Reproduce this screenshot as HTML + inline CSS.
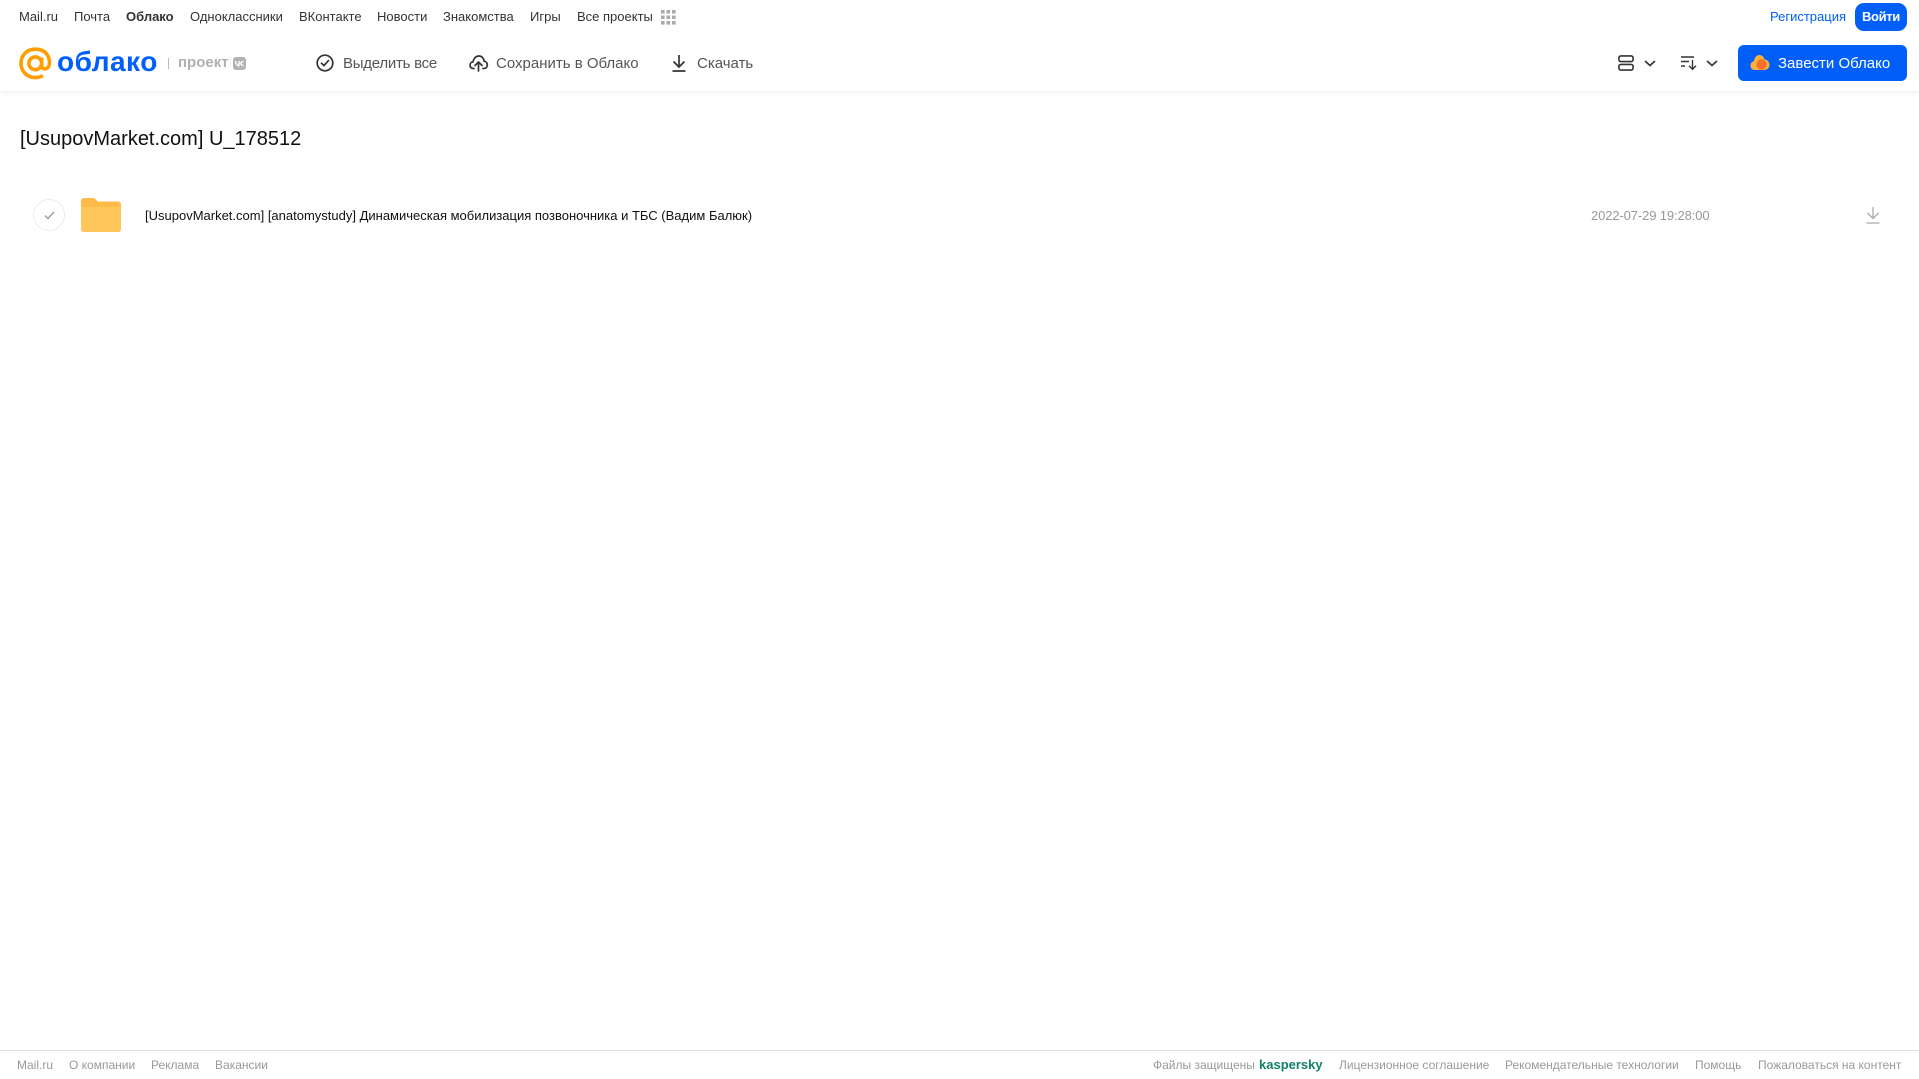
<!DOCTYPE html>
<html lang="ru"><head><meta charset="utf-8"><title>Облако</title>
<style>
html,body{margin:0;padding:0;background:#fff;width:1919px;height:1079px;overflow:hidden;font-family:"Liberation Sans",sans-serif}
.t{position:absolute;white-space:nowrap;line-height:20px}
.n{top:7px;font-size:13px;color:#333}
.b{top:53.500px;font-size:15px;color:#555}
.f{top:1055px;font-size:12px;color:#999}
svg{position:absolute;overflow:visible}
.box{position:absolute}
</style></head><body>
<div class="box" style="left:0;top:0;width:1919px;height:91px;background:#fff;box-shadow:0 1px 6px rgba(0,0,0,.08)"></div>

<span class="t n" style="left:19px">Mail.ru</span>
<span class="t n" style="left:74px">Почта</span>
<span class="t n" style="left:126px;font-weight:bold">Облако</span>
<span class="t n" style="left:190px">Одноклассники</span>
<span class="t n" style="left:299px">ВКонтакте</span>
<span class="t n" style="left:377px">Новости</span>
<span class="t n" style="left:443px">Знакомства</span>
<span class="t n" style="left:530px">Игры</span>
<span class="t n" style="left:577px">Все проекты</span>
<svg style="left:661px;top:10px" width="15" height="15" fill="#aaa"><rect x="0" y="0" width="3.6" height="3.6"/><rect x="5.5" y="0" width="3.6" height="3.6"/><rect x="11" y="0" width="3.6" height="3.6"/><rect x="0" y="5.5" width="3.6" height="3.6"/><rect x="5.5" y="5.5" width="3.6" height="3.6"/><rect x="11" y="5.5" width="3.6" height="3.6"/><rect x="0" y="11" width="3.6" height="3.6"/><rect x="5.5" y="11" width="3.6" height="3.6"/><rect x="11" y="11" width="3.6" height="3.6"/></svg>
<span class="t n" style="left:1770px;color:#005ff9">Регистрация</span>
<div class="box" style="left:1855px;top:3px;width:52px;height:28px;background:#005ff9;border-radius:9px"></div>
<span class="t n" style="left:1862px;color:#fff;font-weight:bold;letter-spacing:-.35px">Войти</span>

<svg style="left:19px;top:47px" width="33" height="33" viewBox="0 0 33 33" fill="none" stroke="#ff9e00" stroke-width="3.600"><circle cx="16.3" cy="16.3" r="6.4"/><path d="M22.7 10.5v8.3c0 4.2 6.8 4.2 7.6-1.2.9-6.4-2.2-15.4-14-15.4C7.8 2.2 2 8.4 2 16.3c0 8 6 14.3 14.300 14.300 3 0 5.300-.7 7.500-2"/></svg>
<span class="t" style="left:57px;top:42px;font-size:28px;line-height:40px;font-weight:bold;color:#005ff9;letter-spacing:.5px">облако</span>
<div class="box" style="left:168px;top:58px;width:1px;height:11px;background:#bbb"></div>
<span class="t" style="left:178px;top:53px;font-size:15px;font-weight:bold;color:#b0b0b0">проект</span>
<div class="box" style="left:233px;top:57px;width:13px;height:13px;background:#b3b3b3;border-radius:3px"></div>
<svg style="left:235px;top:60px" width="9" height="7" fill="none" stroke="#fff" stroke-width="1.300"><path d="M.5 1c.3 3 2 5 3.500 5V1M8.500 1 5 3.500 8.500 6"/></svg>

<svg style="left:316px;top:54px" width="18" height="18" fill="none" stroke="#333" stroke-width="1.700"><circle cx="9" cy="9" r="7.800"/><path d="M5.500 9.200 8 11.600l4.500-5" stroke-linecap="round" stroke-linejoin="round"/></svg>
<span class="t b" style="left:343px;letter-spacing:-.25px">Выделить все</span>
<svg style="left:469px;top:54px" width="19" height="18" fill="none" stroke="#333" stroke-width="1.700" stroke-linecap="round" stroke-linejoin="round"><path d="M5 14.500H4.200C2 14.500 1 12.800 1 11.200 1 9.400 2.300 8 4 7.900 4.500 4.500 6.800 2 9.800 2c3 0 5 2.200 5.300 5.200 2 .2 3.200 1.900 3.200 3.700 0 1.900-1.300 3.600-3.500 3.600H14"/><path d="M9.500 17V8.500M6 11.500l3.500-3.500 3.500 3.500"/></svg>
<span class="t b" style="left:496px">Сохранить в Облако</span>
<svg style="left:671px;top:54px" width="16" height="18" fill="none" stroke="#333" stroke-width="1.700"><path d="M8 1v11.500M2.500 7.500 8 13l5.500-5.500M1.500 17h13"/></svg>
<span class="t b" style="left:697px">Скачать</span>

<svg style="left:1618px;top:55px" width="16" height="16" fill="none" stroke="#333" stroke-width="1.600"><rect x=".9" y=".9" width="14.200" height="5.700" rx="2"/><rect x=".9" y="9.400" width="14.200" height="5.700" rx="2"/></svg>
<svg style="left:1644px;top:60px" width="12" height="7" fill="none" stroke="#333" stroke-width="1.700"><path d="M1 1l5 4.500L11 1"/></svg>
<svg style="left:1681px;top:56px" width="17" height="14" fill="none" stroke="#333" stroke-width="1.400"><path d="M0 1h13M0 5.500h8M0 10h4M11.500 4v9M8 9.800l3.500 3.500 3.500-3.500"/></svg>
<svg style="left:1706px;top:60px" width="12" height="7" fill="none" stroke="#333" stroke-width="1.700"><path d="M1 1l5 4.500L11 1"/></svg>
<div class="box" style="left:1738px;top:45px;width:169px;height:36px;background:#005ff9;border-radius:6px"></div>
<svg style="left:1750px;top:54px" width="20" height="17"><path d="M5 16C2 16 .5 14 .5 11.500c0-2.300 1.500-4 3.500-4.300C4.500 3.500 6.700 1 9.300 1c2.700 0 4.700 2 5.200 4.500 2.800.2 5 2.500 5 5.300 0 3-2.300 5.200-5.200 5.200z" fill="#ffb03a"/><circle cx="11.500" cy="10.500" r="5.200" fill="#f5702a"/></svg>
<span class="t b" style="left:1778px;color:#fff">Завести Облако</span>

<span class="t" style="left:20px;top:128px;font-size:20px;line-height:22px;color:#111">[UsupovMarket.com] U_178512</span>

<div class="box" style="left:33px;top:199px;width:30px;height:30px;border:1px solid #ececec;border-radius:50%"></div>
<svg style="left:44px;top:211px" width="11" height="9" fill="none" stroke="#999" stroke-width="1.300"><path d="M1 4.500 4 7.500 10 1"/></svg>
<svg style="left:81px;top:198px" width="40" height="34"><path d="M0 3C0 1.300 1.300 0 3 0h9c1.500 0 2.300.8 3.200 1.800L16.500 3.500H37c1.700 0 3 1.300 3 3V31c0 1.700-1.300 3-3 3H3c-1.700 0-3-1.300-3-3z" fill="#ffbb4a"/><path d="M0 9h40v22c0 1.700-1.300 3-3 3H3c-1.700 0-3-1.300-3-3z" fill="#ffc65c"/></svg>
<span class="t" style="left:145px;top:206px;font-size:13px;color:#111">[UsupovMarket.com] [anatomystudy] Динамическая мобилизация позвоночника и ТБС (Вадим Балюк)</span>
<span class="t" style="left:1591px;top:206px;font-size:13px;color:#999;letter-spacing:-.12px">2022-07-29 19:28:00</span>
<svg style="left:1866px;top:207px" width="14" height="17" fill="none" stroke="#aaa" stroke-width="1.300"><path d="M7 0v11.500M1.500 6 7 11.500 12.500 6M.5 16h13"/></svg>

<div class="box" style="left:0;top:1050px;width:1919px;height:1px;background:#ddd"></div>
<span class="t f" style="left:17px">Mail.ru</span>
<span class="t f" style="left:69px">О компании</span>
<span class="t f" style="left:151px">Реклама</span>
<span class="t f" style="left:215px">Вакансии</span>
<span class="t f" style="left:1153px">Файлы защищены</span>
<span class="t f" style="left:1259px;font-weight:bold;color:#11806a;font-size:13px">kaspersky</span>
<span class="t f" style="left:1339px">Лицензионное соглашение</span>
<span class="t f" style="left:1505px">Рекомендательные технологии</span>
<span class="t f" style="left:1695px">Помощь</span>
<span class="t f" style="left:1758px">Пожаловаться на контент</span>
</body></html>
